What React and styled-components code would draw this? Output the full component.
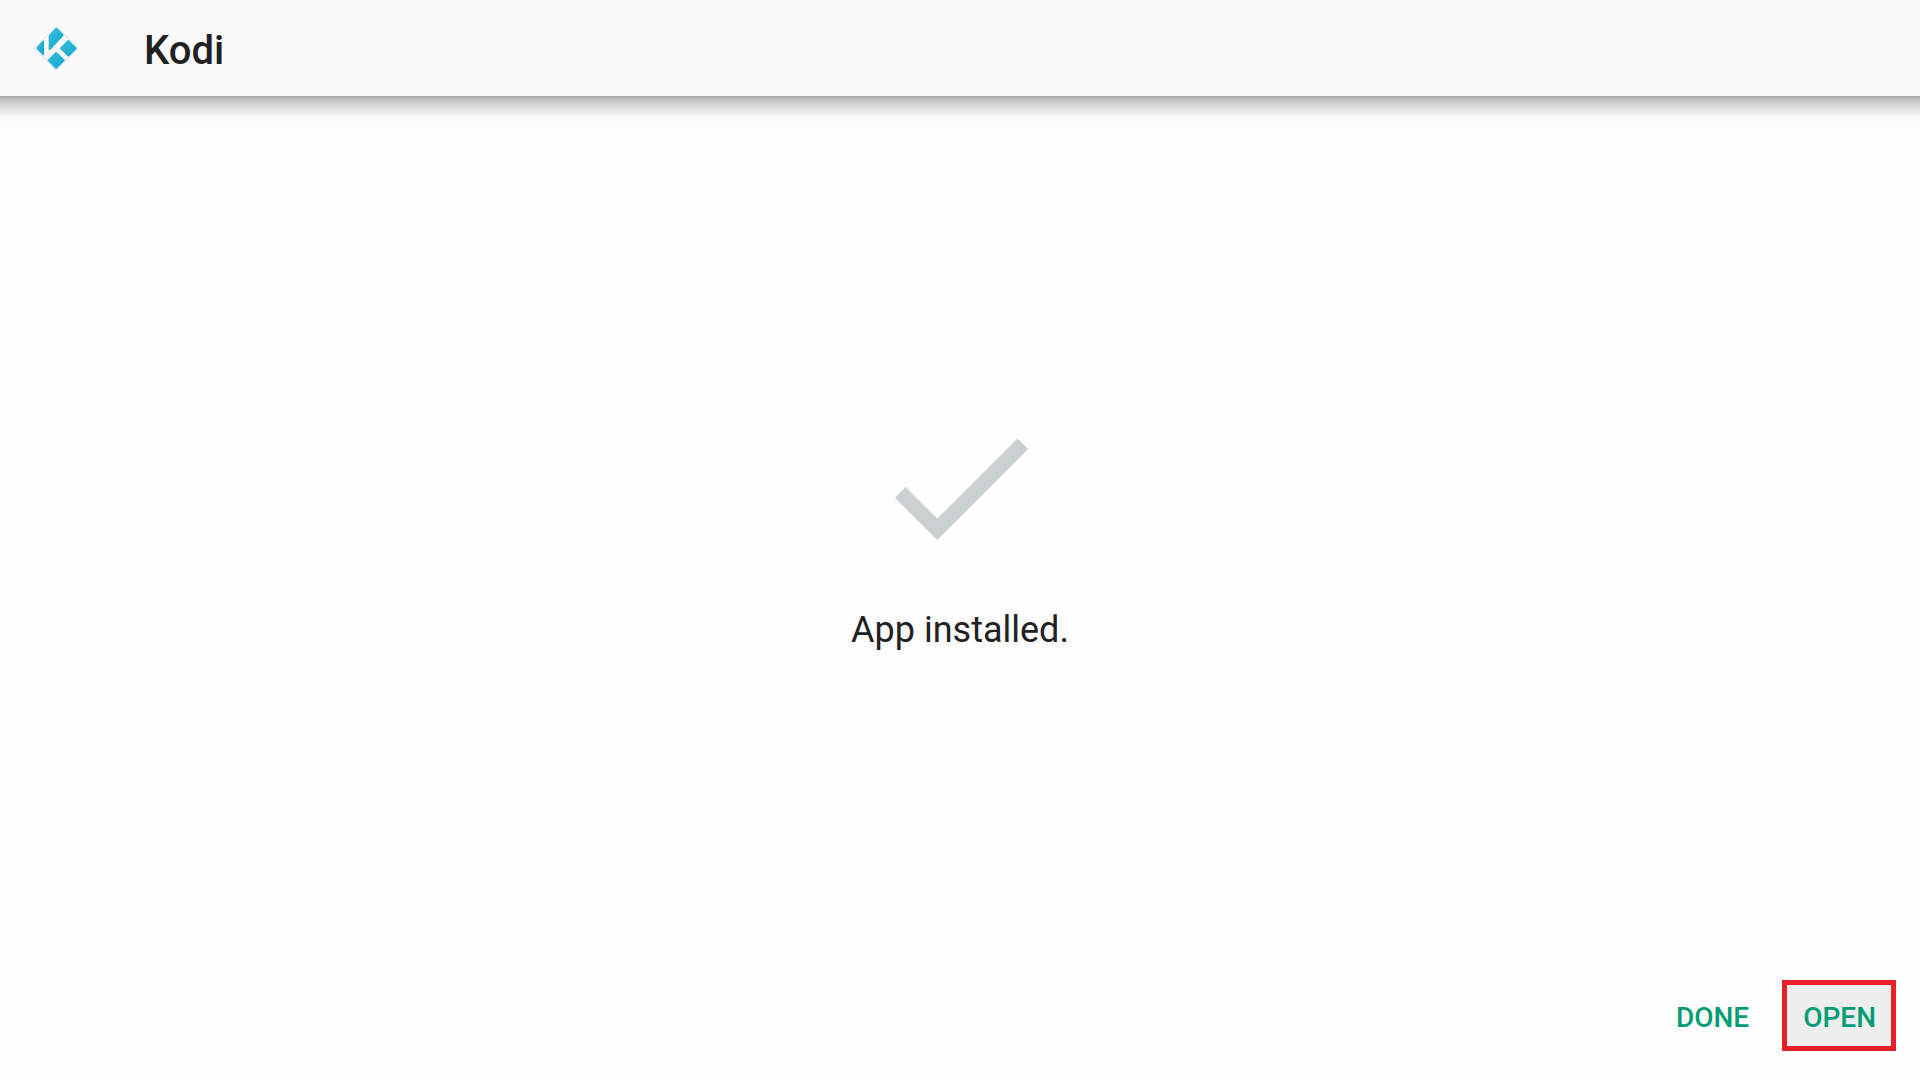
import styled, { createGlobalStyle } from 'styled-components';

const GlobalStyle = createGlobalStyle`
  * {
    box-sizing: border-box;
  }
  body {
    margin: 0;
    background: #fefefe;
    color: #212121;
    font-family: Roboto, "Liberation Sans", sans-serif;
  }
`
const Page = styled.div`
  display: flex;
  flex-direction: column;
  min-height: 100vh;
`
const Header = styled.header`
  display: flex;
  align-items: center;
  gap: 58px;
  height: 96px;
  padding: 0 26px;
  background: #fafafa;
`
const AppIcon = styled.svg`
  width: 60px;
  height: 60px;
`
const Title = styled.h1`
  margin: 6px 0 0;
  font-size: 40px;
  line-height: 48px;
  font-weight: 500;
`
const Main = styled.main`
  flex: 1;
  display: flex;
  flex-direction: column;
  align-items: center;
  justify-content: center;
  gap: 31px;
  background: linear-gradient(#a8a8a8, #c6c6c6 5px, #e2e2e2 13px, #f7f7f7 21px, #fefefe 29px);
`
const CheckIcon = styled.svg`
  width: 182px;
  height: 182px;
  fill: #cad1d0;
`
const Message = styled.p`
  margin: 0;
  font-size: 36px;
  line-height: 42px;
`
const Footer = styled.footer`
  display: flex;
  justify-content: flex-end;
  gap: 13px;
  padding: 29px 24px;
`
const ActionButton = styled.button`
  height: 71px;
  padding: 4px 15px 0 16px;
  border: 5px solid ${({ $focused }) => ($focused ? '#e81f27' : 'transparent')};
  background: ${({ $focused }) => ($focused ? '#eeeeee' : 'transparent')};
  color: #009c75;
  font-family: inherit;
  font-size: 28px;
  line-height: 32px;
  font-weight: 500;
  cursor: pointer;
`

const KodiLogo = () => (
  <AppIcon viewBox='0 0 180 180' role='img' aria-label='Kodi logo'>
    <defs>
      <linearGradient id='kodiBlue' x1='0' y1='0' x2='1' y2='1'>
        <stop offset='0' stopColor='#35bfdf' />
        <stop offset='1' stopColor='#14a5cb' />
      </linearGradient>
      <linearGradient id='kodiPlate' x1='0' y1='0' x2='0' y2='1'>
        <stop offset='0' stopColor='#ffffff' />
        <stop offset='1' stopColor='#eeeeee' />
      </linearGradient>
    </defs>
    <path d='M91 24L157 91L91 157L25 91Z' fill='url(#kodiPlate)' stroke='#dcdee0' strokeWidth='3' strokeLinejoin='round' />
    <g fill='url(#kodiBlue)' stroke='url(#kodiBlue)' strokeWidth='6' strokeLinejoin='round'>
      <path d='M71 53L91 32L110 51L71 93Z' />
      <path d='M34 90L51 71V108Z' />
      <path d='M105 91L127 69L149 91L127 113Z' />
      <path d='M68 127L90 105L113 127L90 149Z' />
    </g>
  </AppIcon>
)

const App = () => {
  return (
    <Page>
      <GlobalStyle />
      <Header>
        <KodiLogo />
        <Title>Kodi</Title>
      </Header>
      <Main>
        <CheckIcon viewBox='0 0 24 24' aria-hidden='true'>
          <path d='M9 16.17L4.83 12l-1.42 1.41L9 19 21 7l-1.41-1.41z' />
        </CheckIcon>
        <Message>App installed.</Message>
      </Main>
      <Footer>
        <ActionButton type='button'>DONE</ActionButton>
        <ActionButton type='button' $focused>OPEN</ActionButton>
      </Footer>
    </Page>
  );
};

export default App;
